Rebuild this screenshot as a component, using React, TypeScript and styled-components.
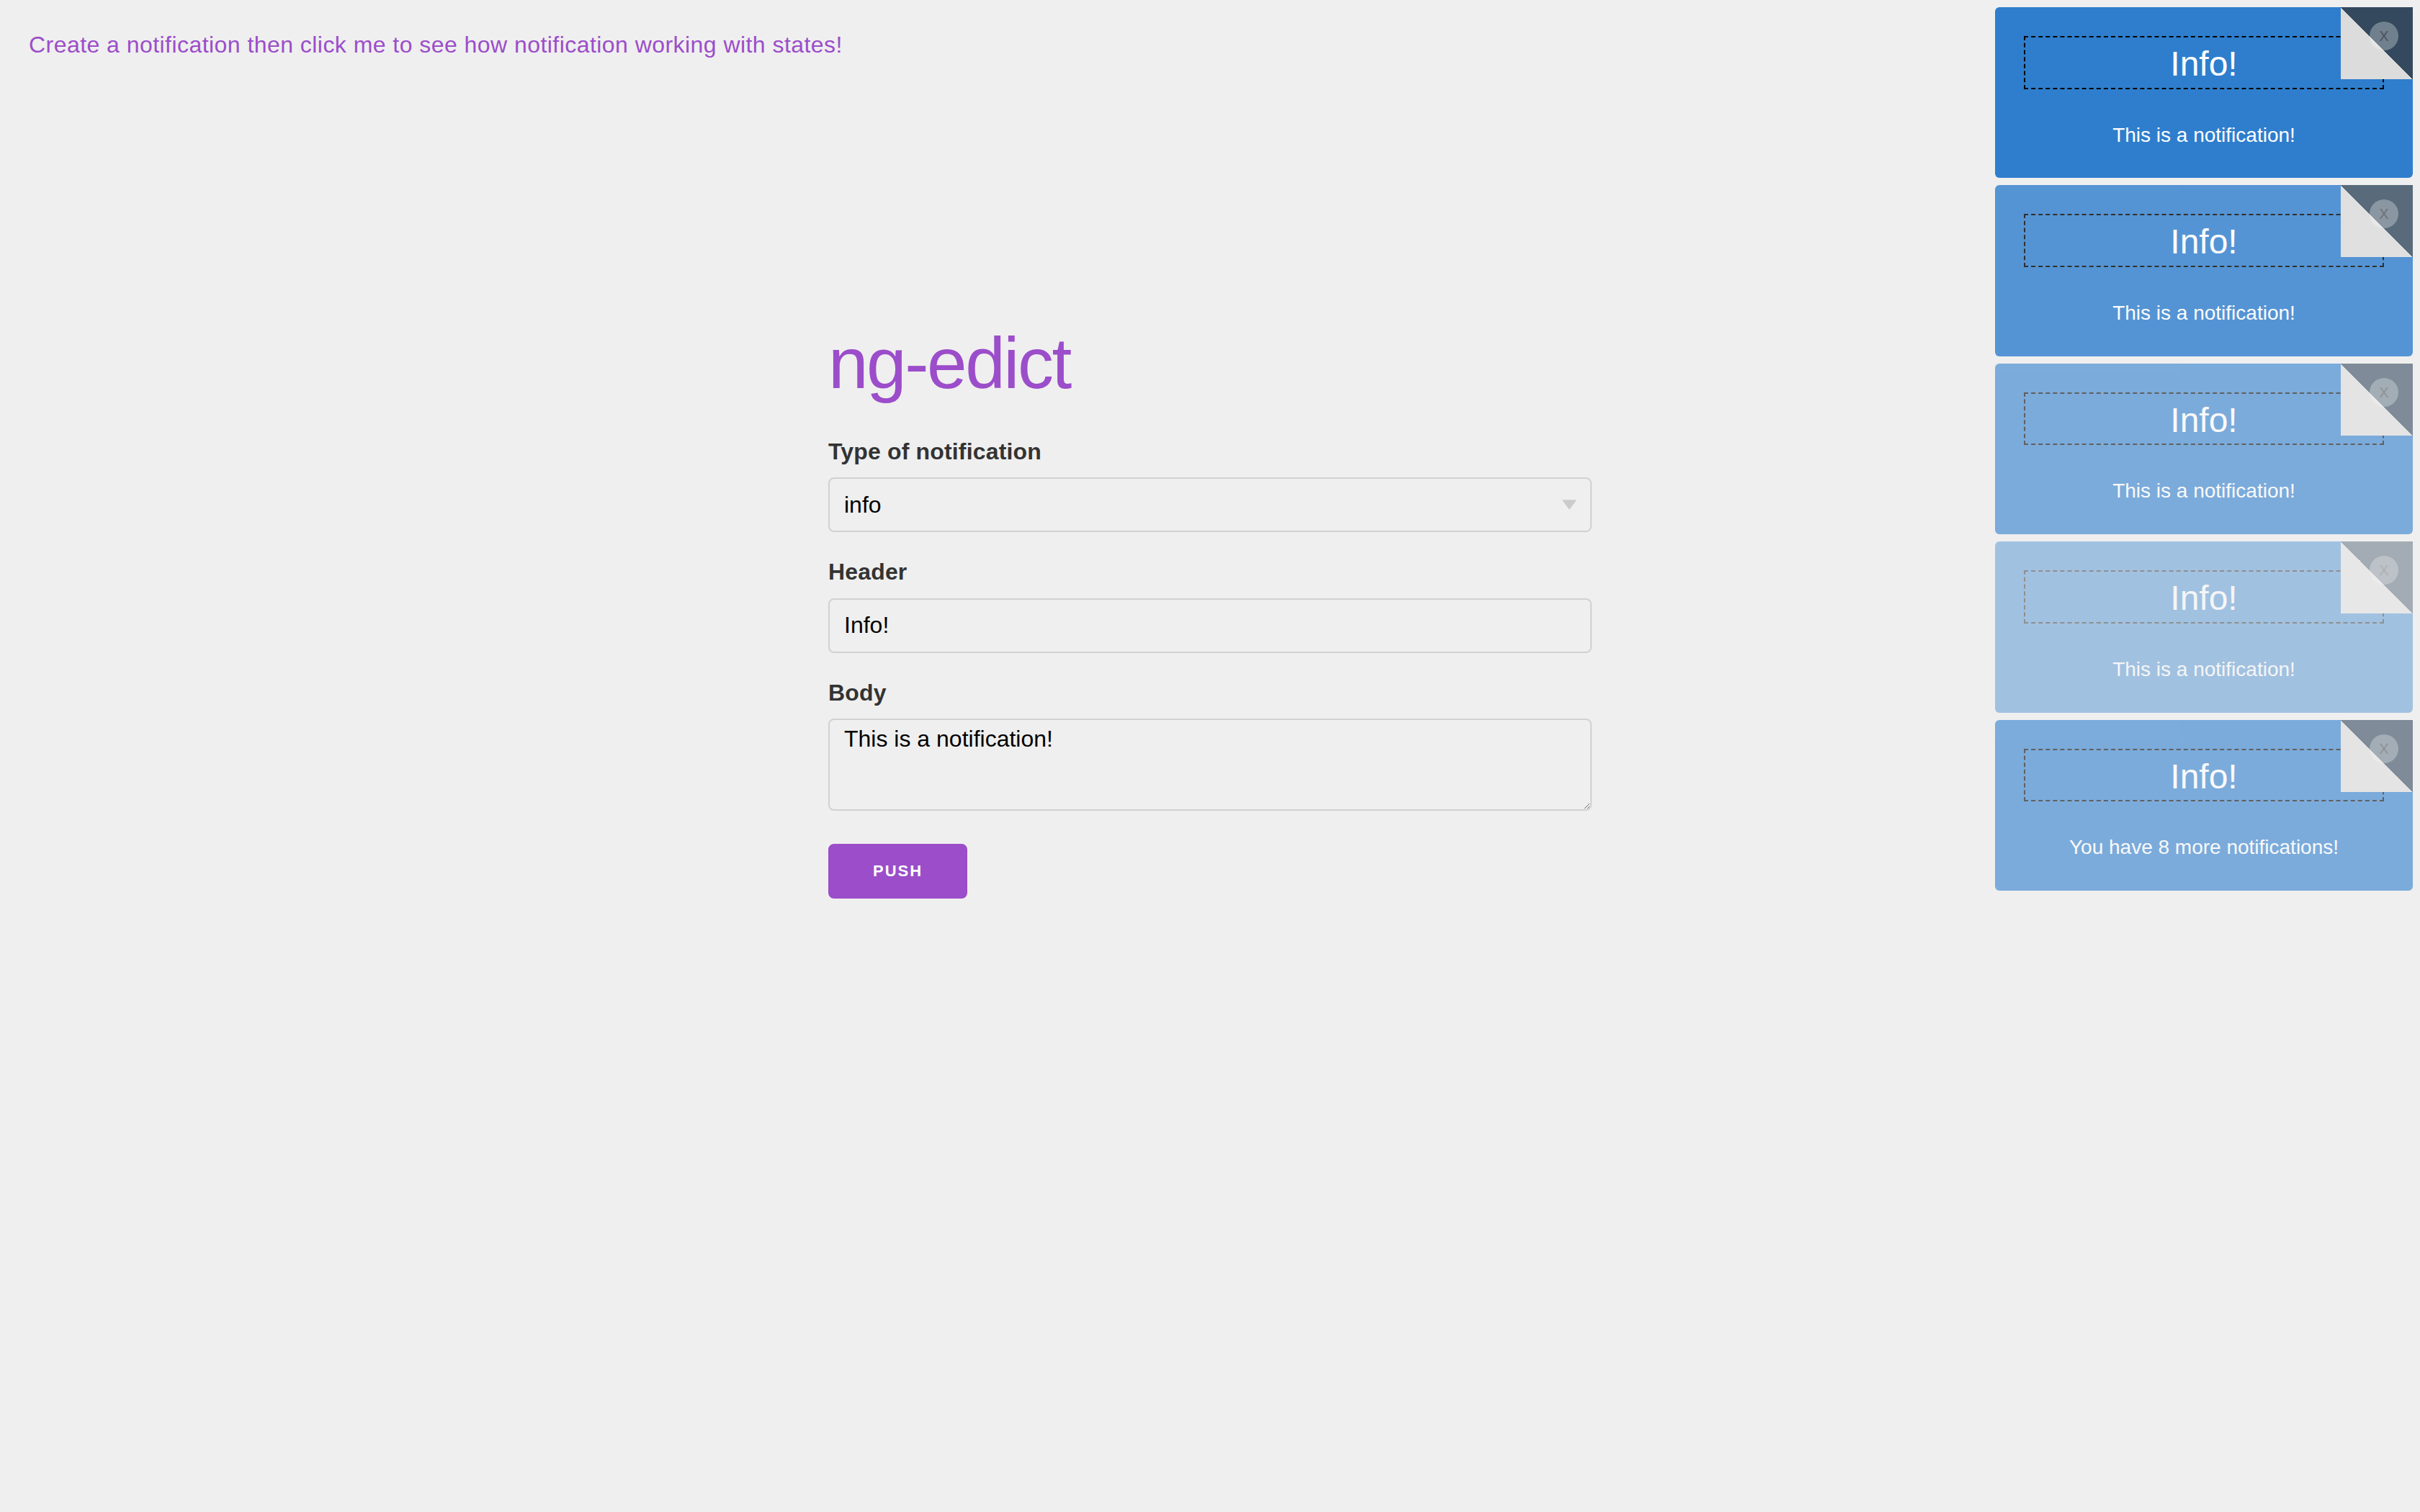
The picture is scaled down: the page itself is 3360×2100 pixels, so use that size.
import React from "react";
import styled, { createGlobalStyle } from "styled-components";

const GlobalStyle = createGlobalStyle`
  html, body {
    margin: 0;
    padding: 0;
    background: #efefef;
  }
  body {
    font-family: "Liberation Sans", Arial, Helvetica, sans-serif;
    color: #333333;
    letter-spacing: 0.01em;
  }
  * { box-sizing: border-box; }
`;

const Page = styled.div`
  min-height: 2100px;
  position: relative;
`;

const TopLink = styled.a`
  display: block;
  padding: 37px 40px 0;
  font-size: 32px;
  line-height: 51.2px;
  letter-spacing: 0.45px;
  color: #9b4dca;
  text-decoration: none;
  cursor: pointer;
`;

const Column = styled.div`
  width: 1060px;
  margin: 356px auto 0;
`;

const Title = styled.h1`
  margin: 0 0 38px;
  font-size: 100px;
  line-height: 120px;
  font-weight: 400;
  letter-spacing: -2.5px;
  color: #9b4dca;
`;

const Form = styled.form`
  display: flex;
  flex-direction: column;
`;

const Label = styled.label`
  display: block;
  font-size: 32px;
  line-height: 51.2px;
  font-weight: 700;
  color: #333333;
  margin-bottom: 10px;
`;

const fieldBase = `
  width: 100%;
  border: 2px solid #d1d1d1;
  border-radius: 8px;
  background: transparent;
  font-family: "Liberation Sans", Arial, Helvetica, sans-serif;
  font-size: 32px;
  color: #000000;
  outline: none;
  margin: 0 0 30px;
`;

const SelectWrap = styled.div`
  position: relative;
  margin-bottom: 30px;
`;

const Select = styled.select`
  ${fieldBase}
  margin: 0;
  height: 76px;
  padding: 0 60px 0 20px;
  appearance: none;
  -webkit-appearance: none;
  display: block;
`;

const Arrow = styled.svg`
  position: absolute;
  right: 2px;
  top: 24px;
  pointer-events: none;
`;

const Input = styled.input`
  ${fieldBase}
  height: 76px;
  padding: 0 20px;
  display: block;
`;

const TextArea = styled.textarea`
  ${fieldBase}
  height: 128px;
  min-height: 128px;
  padding: 8px 20px 12px;
  line-height: 36.8px;
  display: block;
  resize: vertical;
  margin-bottom: 46px;
`;

const PushButton = styled.button`
  align-self: flex-start;
  height: 76px;
  padding: 0 60px;
  border: 2px solid #9b4dca;
  border-radius: 8px;
  background: #9b4dca;
  color: #ffffff;
  font-family: "Liberation Sans", Arial, Helvetica, sans-serif;
  font-size: 22px;
  font-weight: 700;
  letter-spacing: 2px;
  text-transform: uppercase;
  line-height: 72px;
  cursor: pointer;
`;

const Stack = styled.div`
  position: fixed;
  top: 10px;
  right: 10px;
  display: flex;
  flex-direction: column;
  gap: 10px;
  width: 580px;
`;

const Card = styled.div<{ $opacity: number }>`
  position: relative;
  width: 580px;
  padding: 40px 40px 37px;
  border-radius: 6px;
  background: #2e7ecd;
  color: #ffffff;
  text-align: center;
  letter-spacing: 0;
  opacity: ${(p) => p.$opacity};
`;

const CardHeader = styled.div`
  border: 2px dashed #000000;
  padding: 8px 0 4px;
  font-size: 48px;
  line-height: 57.6px;
  font-weight: 400;
`;

const CardBody = styled.div`
  margin-top: 42px;
  font-size: 28px;
  line-height: 44.8px;
`;

const Corner = styled.div`
  position: absolute;
  top: 0;
  right: 0;
  width: 100px;
  height: 100px;
  background: linear-gradient(45deg, #dcdcdc 50%, #34495e 50%);
`;

const Close = styled.div`
  position: absolute;
  left: 40px;
  top: 20px;
  width: 40px;
  height: 40px;
  border-radius: 50%;
  background: rgba(255, 255, 255, 0.3);
  color: #4d525a;
  font-size: 20px;
  line-height: 40px;
  text-align: center;
  cursor: pointer;
`;

const notifications = [
  { opacity: 1, body: "This is a notification!" },
  { opacity: 0.8, body: "This is a notification!" },
  { opacity: 0.6, body: "This is a notification!" },
  { opacity: 0.4, body: "This is a notification!" },
  { opacity: 0.6, body: "You have 8 more notifications!" },
];

export default function App() {
  return (
    <Page>
      <GlobalStyle />
      <TopLink>Create a notification then click me to see how notification working with states!</TopLink>
      <Column>
        <Title>ng-edict</Title>
        <Form onSubmit={(e) => e.preventDefault()}>
          <Label htmlFor="type">Type of notification</Label>
          <SelectWrap>
            <Select id="type" defaultValue="info">
              <option value="info">info</option>
              <option value="success">success</option>
              <option value="warning">warning</option>
              <option value="error">error</option>
            </Select>
            <Arrow width="58" height="28" viewBox="0 0 29 14">
              <path fill="#cbcbcb" d="M9.37727 3.625l5.08154 6.93523L19.54036 3.625" />
            </Arrow>
          </SelectWrap>
          <Label htmlFor="header">Header</Label>
          <Input id="header" type="text" defaultValue="Info!" />
          <Label htmlFor="body">Body</Label>
          <TextArea id="body" defaultValue="This is a notification!" />
          <PushButton type="submit">Push</PushButton>
        </Form>
      </Column>
      <Stack>
        {notifications.map((n, i) => (
          <Card key={i} $opacity={n.opacity}>
            <CardHeader>Info!</CardHeader>
            <CardBody>{n.body}</CardBody>
            <Corner>
              <Close>X</Close>
            </Corner>
          </Card>
        ))}
      </Stack>
    </Page>
  );
}
